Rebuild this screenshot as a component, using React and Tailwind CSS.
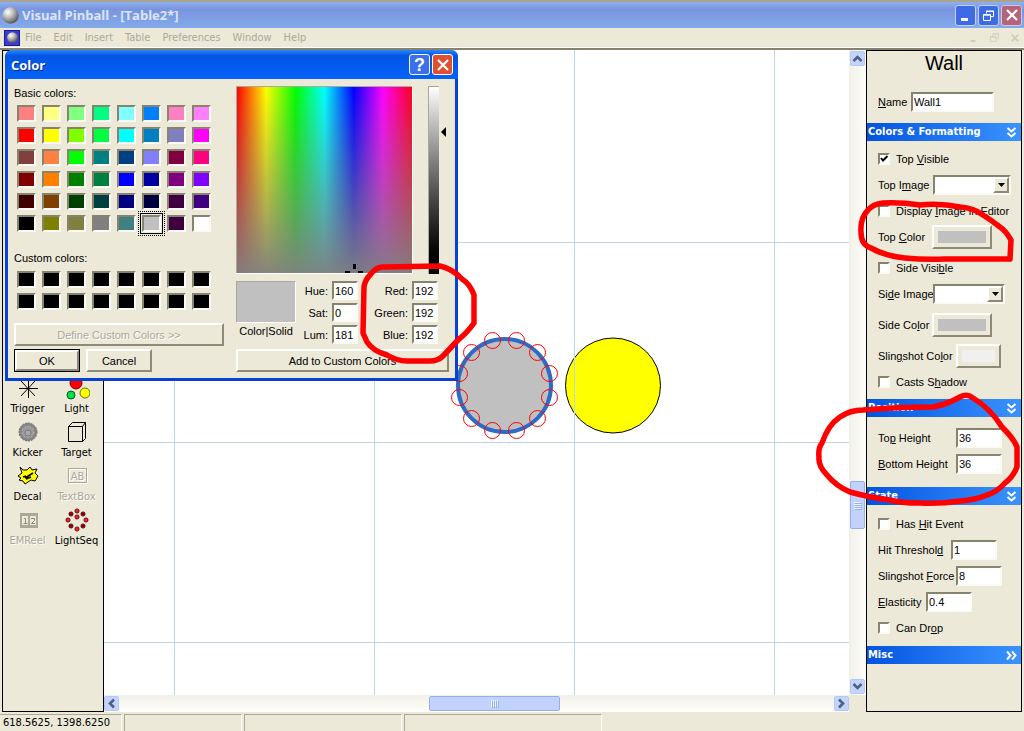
import { useState } from 'react';
import { clsx } from 'clsx';

const MENUS = ['File', 'Edit', 'Insert', 'Table', 'Preferences', 'Window', 'Help'];

const BASIC_COLORS = [
  '#ff8080', '#ffff80', '#80ff80', '#00ff80', '#80ffff', '#0080ff', '#ff80c0', '#ff80ff',
  '#ff0000', '#ffff00', '#80ff00', '#00ff40', '#00ffff', '#0080c0', '#8080c0', '#ff00ff',
  '#804040', '#ff8040', '#00ff00', '#008080', '#004080', '#8080ff', '#800040', '#ff0080',
  '#800000', '#ff8000', '#008000', '#008040', '#0000ff', '#0000a0', '#800080', '#8000ff',
  '#400000', '#804000', '#004000', '#004040', '#000080', '#000040', '#400040', '#400080',
  '#000000', '#808000', '#808040', '#808080', '#408080', '#c0c0c0', '#400040', '#ffffff',
];

const NODES = [
  [492, 340], [516, 340], [537, 352], [549, 373], [549, 397], [537, 418],
  [516, 430], [492, 430], [471, 418], [459, 397], [459, 373], [471, 352],
];

const SUNKEN = 'border-2 border-t-[#86836f] border-l-[#86836f] border-r-[#fbfaf4] border-b-[#fbfaf4]';
const RAISED = 'border-2 border-t-white border-l-white border-r-[#8d8a78] border-b-[#8d8a78]';

export default function App() {
  const [dialogOpen, setDialogOpen] = useState(true);

  return (
    <div className="relative flex h-screen flex-col overflow-hidden bg-[#ece9d8] font-['Liberation_Sans',sans-serif] text-[11px] leading-[14px] text-black">
      <TitleBar />
      <MenuBar />
      <div className="flex min-h-0 flex-1 border-t-2 border-[#85826f] pl-[2px] pr-[2px]">
        <Palette />
        <Workspace />
        <Properties />
      </div>
      <StatusBar />
      {dialogOpen && <ColorDialog onClose={() => setDialogOpen(false)} />}
      <Markup />
    </div>
  );
}

function Ball({ size, id }) {
  return (
    <svg width={size} height={size} viewBox="0 0 16 16" aria-hidden="true">
      <defs>
        <radialGradient id={id} cx="0.35" cy="0.3" r="0.7">
          <stop offset="0" stopColor="#ffffff" />
          <stop offset="0.45" stopColor="#bdbdbd" />
          <stop offset="1" stopColor="#5c5c5c" />
        </radialGradient>
      </defs>
      <circle cx="8" cy="8" r="7.8" fill={`url(#${id})`} />
    </svg>
  );
}

function RestoreIcon({ size = 11 }) {
  return (
    <svg width={size} height={size} viewBox="0 0 11 11" fill="none" stroke="currentColor" aria-hidden="true">
      <path d="M3.5 3.5V1.5H10.5V6.5H8M3 1H11" />
      <path d="M.5 4.5H7.5V10.5H.5ZM0 5.2H8" />
    </svg>
  );
}

function CrossIcon({ size = 12, width = 2.2 }) {
  return (
    <svg width={size} height={size} viewBox="0 0 12 12" stroke="currentColor" strokeWidth={width} aria-hidden="true">
      <path d="M1 1L11 11M11 1L1 11" />
    </svg>
  );
}

function MinIcon({ size = 12 }) {
  return (
    <svg width={size} height={size} viewBox="0 0 12 12" fill="currentColor" aria-hidden="true">
      <path d="M1 9h7v3H1z" />
    </svg>
  );
}

function CaptionButton({ label, className, children }) {
  return (
    <button aria-label={label} className={clsx('flex size-[21px] items-center justify-center rounded-[3px] border text-white', className)}>
      {children}
    </button>
  );
}

function TitleBar() {
  return (
    <header className="flex h-7 shrink-0 items-center border-t-2 border-[#a9a48f] bg-linear-to-b from-[#8fb0ee] via-[#7994de] via-30% to-[#84abea] pl-[2px] pr-[2px]">
      <Ball size={17} id="ball-title" />
      <h1 className="ml-[3px] flex-1 font-['Open_Sans',sans-serif] text-[13px] leading-4 font-bold text-[#dbe5fa]">Visual Pinball - [Table2*]</h1>
      <div className="flex gap-[2px]">
        <CaptionButton label="Minimize" className="border-[#c3d3f6] bg-[#3f6ae6]"><MinIcon /></CaptionButton>
        <CaptionButton label="Restore" className="border-[#c3d3f6] bg-[#3f6ae6]"><RestoreIcon /></CaptionButton>
        <CaptionButton label="Close" className="border-[#d5c5dc] bg-[#b3647a]"><CrossIcon /></CaptionButton>
      </div>
    </header>
  );
}

function MenuBar() {
  return (
    <nav className="flex h-5 shrink-0 items-center border-b border-white pl-1 text-[#aca899]">
      <span className="flex size-4 items-center justify-center border border-[#1a1a90] bg-[#3b3bd8]"><Ball size={11} id="ball-menu" /></span>
      <div className="ml-[5px] flex flex-1 gap-3 font-['DejaVu_Sans_Condensed','DejaVu_Sans',sans-serif]">
        {MENUS.map((m) => <button key={m}>{m}</button>)}
      </div>
      <div className="flex gap-3 pr-[5px] text-[#cfccbc]">
        <button aria-label="Minimize table"><MinIcon size={8} /></button>
        <button aria-label="Restore table"><RestoreIcon size={9} /></button>
        <button aria-label="Close table"><CrossIcon size={8} width={2.5} /></button>
      </div>
    </nav>
  );
}

const TOOLS = [
  { name: 'Trigger', icon: TriggerIcon },
  { name: 'Light', icon: LightIcon },
  { name: 'Kicker', icon: KickerIcon },
  { name: 'Target', icon: TargetIcon },
  { name: 'Decal', icon: DecalIcon },
  { name: 'TextBox', icon: TextBoxIcon, disabled: true },
  { name: 'EMReel', icon: ReelIcon, disabled: true },
  { name: 'LightSeq', icon: LightSeqIcon },
];

function Palette() {
  return (
    <aside className="w-[102px] shrink-0 border border-black">
      <div className="mt-[325px] grid w-[98px] grid-cols-2 font-['DejaVu_Sans_Condensed','DejaVu_Sans',sans-serif]">
        {TOOLS.map(({ name, icon: Icon, disabled }) => (
          <button
            key={name}
            disabled={disabled}
            className={clsx('flex h-11 flex-col items-center', disabled && 'text-[#aca899] [text-shadow:1px_1px_0_white]')}
          >
            <Icon />
            <span>{name}</span>
          </button>
        ))}
      </div>
    </aside>
  );
}

function ToolIcon({ children }) {
  return <svg width="26" height="26" viewBox="0 0 26 26" fill="none" className="shrink-0" aria-hidden="true">{children}</svg>;
}

function TriggerIcon() {
  return (
    <ToolIcon>
      <path d="M13.5 2V22M4 12.5H23M6 5L20 20M20 5L6 20" stroke="#000" />
    </ToolIcon>
  );
}

function LightIcon() {
  return (
    <ToolIcon>
      <circle cx="12" cy="7" r="6" fill="#f00" stroke="#800000" />
      <circle cx="7" cy="19" r="4" fill="#00e040" stroke="#006020" />
      <circle cx="21" cy="17" r="5" fill="#ff0" stroke="#707000" />
    </ToolIcon>
  );
}

function KickerIcon() {
  return (
    <ToolIcon>
      <circle cx="13" cy="12" r="9" fill="#858585" stroke="#6a6a6a" strokeDasharray="2 1" />
      <circle cx="13" cy="12" r="6" fill="#9b9b9b" stroke="#b5b5b5" strokeDasharray="2 2" />
      <circle cx="13" cy="13" r="3" fill="#a9a9a9" stroke="#7b7b7b" />
    </ToolIcon>
  );
}

function TargetIcon() {
  return (
    <ToolIcon>
      <path d="M4.5 6.5H18.5V21.5H4.5ZM4.5 6.5L8.5 2.5H21.500L18.5 6.5M21.500 2.500V18.500L18.5 21.5" stroke="#000" />
    </ToolIcon>
  );
}

function DecalIcon() {
  return (
    <ToolIcon>
      <path d="M5 3L8 6H12L15 3L17 6L22 5L20 9L23 12L20 17L16 16L10 20L8 17L4 16L6 14L3 12L7 9Z" fill="#ff0" stroke="#000" />
      <path d="M8 13L11 12M10 14L18 9M11 15L16 13" stroke="#000" strokeWidth="1.5" />
    </ToolIcon>
  );
}

function TextBoxIcon() {
  return (
    <ToolIcon>
      <rect x="5.5" y="5.5" width="18" height="14" stroke="#fff" />
      <rect x="4.5" y="4.5" width="18" height="14" stroke="#aca899" />
      <text x="13.5" y="16" textAnchor="middle" fontSize="11" fill="#aca899">AB</text>
    </ToolIcon>
  );
}

function ReelIcon() {
  return (
    <ToolIcon>
      <rect x="5.5" y="5.5" width="17" height="14" fill="#aca899" stroke="#aca899" />
      <rect x="7" y="8" width="6" height="9" fill="#ece9d8" />
      <rect x="15" y="8" width="6" height="9" fill="#ece9d8" />
      <path d="M9 10.5h1.5V15M8.5 15.5h4M16 10.5h3.500v2L16.500 15.500H20" stroke="#8f8b7a" />
    </ToolIcon>
  );
}

function LightSeqIcon() {
  const dots = [[13, 3], [7, 6], [19, 6], [4, 12], [22, 12], [7, 18], [19, 18], [13, 21], [13, 9]];
  return (
    <ToolIcon>
      {dots.map(([x, y], i) => (
        <circle key={i} cx={x} cy={y} r="2.1" fill={x === 13 || y === 12 ? '#f02020' : '#900010'} stroke="#500000" strokeWidth="0.8" />
      ))}
    </ToolIcon>
  );
}

function Chevron({ rotate }) {
  return (
    <svg width="11" height="11" viewBox="0 0 11 11" fill="none" stroke="#4d6185" strokeWidth="2.6" className={rotate} aria-hidden="true">
      <path d="M1.5 8L5.5 4L9.5 8" />
    </svg>
  );
}

const SCROLL_BTN = 'flex size-[15px] shrink-0 items-center justify-center rounded-[2px] border border-[#b4c8f6] bg-[#c4d4fc]';

function Workspace() {
  return (
    <main className="grid min-w-0 flex-1 grid-cols-[1fr_17px] grid-rows-[1fr_17px]">
      <div className="overflow-hidden bg-white"><TableCanvas /></div>
      <div className="flex flex-col items-center bg-linear-to-r from-[#f1f0e8] to-[#fefefb] py-px">
        <button aria-label="Scroll up" className={SCROLL_BTN}><Chevron /></button>
        <div className="mt-[415px] flex h-12 w-[15px] flex-col items-center justify-center gap-px rounded-[2px] border border-[#98b0e8] bg-[#c2d2fc]">
          <Grip className="h-px w-[7px]" />
        </div>
        <button aria-label="Scroll down" className={clsx(SCROLL_BTN, 'mt-auto')}><Chevron rotate="rotate-180" /></button>
      </div>
      <div className="flex items-center bg-linear-to-b from-[#f1f0e8] to-[#fefefb]">
        <button aria-label="Scroll left" className={SCROLL_BTN}><Chevron rotate="-rotate-90" /></button>
        <div className="ml-[310px] flex h-[15px] w-[131px] items-center justify-center gap-px rounded-[2px] border border-[#98b0e8] bg-[#c2d2fc]">
          <Grip className="h-[7px] w-px" />
        </div>
        <button aria-label="Scroll right" className={clsx(SCROLL_BTN, 'ml-auto')}><Chevron rotate="rotate-90" /></button>
      </div>
      <div />
    </main>
  );
}

function Grip({ className }) {
  return [0, 1, 2, 3].map((i) => <i key={i} className={clsx('bg-[#eef4fe] shadow-[1px_1px_0_#8cb0f8]', className)} />);
}

function TableCanvas() {
  return (
    <svg width="100%" height="100%" fill="none" className="block" role="img" aria-label="Table layout">
      <g transform="translate(-104 -50)">
        <circle cx="504.5" cy="385.5" r="46.5" fill="#c0c0c0" stroke="#316ac5" strokeWidth="4" />
        <circle cx="613" cy="385.5" r="47.5" fill="#ff0" stroke="#000" />
        <g stroke="#bcd6e6">
          {[174.5, 374.5, 574.5, 774.5].map((x) => <path key={x} d={`M${x} 50V3000`} />)}
          {[242.5, 442.5, 642.5].map((y) => <path key={y} d={`M104 ${y}H3000`} />)}
        </g>
        {NODES.map(([x, y]) => <circle key={`${x}-${y}`} cx={x + 0.5} cy={y + 0.5} r="8" stroke="#f00" />)}
      </g>
    </svg>
  );
}

function Section({ title, closed, children }) {
  return (
    <section>
      <h3>
        <button className="flex h-[18px] w-full items-center justify-between bg-linear-to-r from-[#0453e0] to-[#3a93ff] pl-px pr-1 font-['DejaVu_Sans_Condensed','DejaVu_Sans',sans-serif] font-bold text-white">
          {title}
          <svg width="11" height="11" viewBox="0 0 11 11" fill="none" stroke="#fff" strokeWidth="2" className={closed ? '-rotate-90' : ''} aria-hidden="true">
            <path d="M1.5 1L5.5 4.5L9.5 1M1.5 6L5.5 9.5L9.5 6" />
          </svg>
        </button>
      </h3>
      {children}
    </section>
  );
}

// "Top _Visible" underlines the letter that follows the underscore
function Mnemonic({ text }) {
  const [head, ...rest] = text.split('_');
  return <>{head}{rest.map((part, i) => <span key={i}><u>{part[0]}</u>{part.slice(1)}</span>)}</>;
}

function Check({ label, defaultChecked, className }) {
  return (
    <label className={clsx('flex h-[26px] items-center gap-[6px]', className)}>
      <span className="grid">
        <input type="checkbox" defaultChecked={defaultChecked} className={clsx('peer col-start-1 row-start-1 size-3 appearance-none bg-white', SUNKEN)} />
        <svg width="12" height="12" viewBox="0 0 12 12" fill="none" stroke="#000" strokeWidth="2" className="pointer-events-none col-start-1 row-start-1 hidden peer-checked:block" aria-hidden="true">
          <path d="M3 5L5 7.5L9.5 3" />
        </svg>
      </span>
      <span><Mnemonic text={label} /></span>
    </label>
  );
}

function Row({ id, label, labelWidth, className, children }) {
  return (
    <div className={clsx('flex h-[26px] items-center', className)}>
      <label htmlFor={id} className={clsx('shrink-0 whitespace-nowrap', labelWidth)}><Mnemonic text={label} /></label>
      {children}
    </div>
  );
}

function TextInput({ id, value, width = 'w-[46px]' }) {
  return <input id={id} type="text" defaultValue={value} className={clsx('h-5 bg-white px-px outline-none', SUNKEN, width)} />;
}

function ImageSelect({ id, width }) {
  return (
    <span className={clsx('relative block h-5 bg-white', SUNKEN, width)}>
      <select id={id} className="size-full appearance-none outline-none"><option value="" aria-label="None" /></select>
      <span className={clsx('pointer-events-none absolute inset-y-0 right-0 flex w-4 items-center justify-center bg-[#ece9d8]', RAISED)}>
        <svg width="7" height="4" viewBox="0 0 7 4" className="shrink-0" aria-hidden="true"><path d="M0 0H7L3.5 4Z" /></svg>
      </span>
    </span>
  );
}

function ColorButton({ id, size, color }) {
  return (
    <button id={id} className={clsx('flex h-6 items-center justify-center px-1', RAISED, size)}>
      <span className={clsx('block h-3 w-full', color)} />
    </button>
  );
}

function Properties() {
  return (
    <aside className="w-[156px] shrink-0 border border-black">
      <h2 className="h-[26px] text-center text-[20px] leading-6">Wall</h2>
      <div className="pt-3 pb-2 pl-[11px]">
        <Row id="name" label="_Name" labelWidth="w-[33px]"><TextInput id="name" value="Wall1" width="w-[83px]" /></Row>
      </div>
      <Section title="Colors & Formatting">
        <div className="pt-[5px] pb-1 pl-[11px]">
          <Check label="Top _Visible" defaultChecked />
          <Row id="top-image" label="Top I_mage" labelWidth="w-[55px]"><ImageSelect id="top-image" width="w-[78px]" /></Row>
          <Check label="Display _Image in Editor" />
          <Row id="top-color" label="Top _Color" labelWidth="w-[54px]"><ColorButton id="top-color" size="w-[60px]" color="bg-[#c0c0c0]" /></Row>
          <Check label="Side Visi_ble" className="mt-[5px]" />
          <Row id="side-image" label="Si_de Image" labelWidth="w-[55px]"><ImageSelect id="side-image" width="w-[72px]" /></Row>
          <Row id="side-color" label="Side Co_lor" labelWidth="w-[54px]" className="mt-[5px]"><ColorButton id="side-color" size="w-[60px]" color="bg-[#c0c0c0]" /></Row>
          <Row id="sling-color" label="Slin_gshot Co_lor" labelWidth="w-[78px]" className="mt-[5px]"><ColorButton id="sling-color" size="w-[45px]" color="bg-[#f0f0f0]" /></Row>
          <Check label="Casts S_hadow" />
        </div>
      </Section>
      <Section title="Position">
        <div className="pt-2 pb-[10px] pl-[11px]">
          <Row id="top-height" label="To_p Height" labelWidth="w-[78px]"><TextInput id="top-height" value="36" /></Row>
          <Row id="bottom-height" label="_Bottom Height" labelWidth="w-[78px]"><TextInput id="bottom-height" value="36" /></Row>
        </div>
      </Section>
      <Section title="State">
        <div className="pt-[6px] pb-[5px] pl-[11px]">
          <Check label="Has _Hit Event" />
          <Row id="hit" label="Hit Threshol_d" labelWidth="w-[73px]"><TextInput id="hit" value="1" /></Row>
          <Row id="force" label="Slingshot _Force" labelWidth="w-[78px]"><TextInput id="force" value="8" /></Row>
          <Row id="elasticity" label="_Elasticity" labelWidth="w-[48px]"><TextInput id="elasticity" value="0.4" /></Row>
          <Check label="Can Dr_op" />
        </div>
      </Section>
      <Section title="Misc" closed />
    </aside>
  );
}

function StatusBar() {
  const pane = 'border-t border-r border-t-[#aca899] border-r-white';
  return (
    <footer className="flex h-[19px] shrink-0 gap-[2px] pt-[2px] font-['DejaVu_Sans_Condensed','DejaVu_Sans',sans-serif]">
      <div className={clsx('w-[122px] pl-[3px] leading-[16px]', pane)}>618.5625, 1398.6250</div>
      <div className={clsx('w-[118px] border-l border-l-[#aca899]', pane)} />
      <div className={clsx('w-[158px] border-l border-l-[#aca899]', pane)} />
      <div className={clsx('w-[198px] border-l border-l-[#aca899]', pane)} />
    </footer>
  );
}

function Swatch({ color, selected }) {
  return (
    <button
      aria-label={color}
      className={clsx('h-[17px] w-[19px]', SUNKEN, selected && 'shadow-[0_0_0_1px_#ece9d8,0_0_0_2px_#000] outline-1 outline-offset-3 outline-dotted outline-black')}
      style={{ backgroundColor: color }}
    />
  );
}

function NumberField({ id, label, value }) {
  return (
    <div className="flex items-center justify-end gap-1">
      <label htmlFor={id}>{label}:</label>
      <input id={id} type="text" defaultValue={value} className={clsx('h-[19px] w-[26px] bg-white px-px outline-none', SUNKEN)} />
    </div>
  );
}

function ColorDialog({ onClose }) {
  return (
    <div role="dialog" aria-label="Color" className="absolute top-[50px] left-[5px] w-[453px] rounded-t-[7px] border-x-[3px] border-b-[3px] border-[#0842d4] bg-[#ece9d8]">
      <div className="-mx-[3px] flex h-[29px] items-center gap-[2px] rounded-t-[7px] bg-linear-to-b from-[#2a86f8] via-[#0354e4] via-20% to-[#0463fb] px-[5px]">
        <h2 className="flex-1 pl-px font-['Open_Sans',sans-serif] text-[13px] leading-4 font-bold text-white [text-shadow:1px_1px_0_#0a2a80]">Color</h2>
        <button aria-label="Help" className="flex size-[21px] items-center justify-center rounded-[3px] border border-white bg-[#3c70ea] text-[18px] leading-5 font-bold text-white">?</button>
        <button aria-label="Close" onClick={onClose} className="flex size-[21px] items-center justify-center rounded-[3px] border border-white bg-[#df5030] text-white"><CrossIcon /></button>
      </div>
      <div className="flex justify-between px-[6px] pt-[7px] pb-[6px]">
        <div className="flex w-[210px] flex-col">
          <p>Basic colors:</p>
          <div className="mt-[5px] grid grid-cols-[repeat(8,19px)] gap-x-[6px] gap-y-[5px] pl-[3px]">
            {BASIC_COLORS.map((c, i) => <Swatch key={i} color={c} selected={i === 45} />)}
          </div>
          <p className="mt-[19px]">Custom colors:</p>
          <div className="mt-[6px] grid grid-cols-[repeat(8,19px)] gap-x-[6px] gap-y-[5px] pl-[3px]">
            {Array.from({ length: 16 }, (_, i) => <Swatch key={i} color="#000000" />)}
          </div>
          <button disabled className={clsx('mt-auto h-[23px] text-[#aca899] [text-shadow:1px_1px_0_white]', RAISED)}>Define Custom Colors &gt;&gt;</button>
          <div className="mt-[3px] flex gap-[6px]">
            <button onClick={onClose} className="h-[23px] w-[66px] border border-black"><span className={clsx('flex size-full items-center justify-center', RAISED)}>OK</span></button>
            <button onClick={onClose} className={clsx('h-[23px] w-[66px]', RAISED)}>Cancel</button>
          </div>
        </div>
        <div className="flex w-[213px] flex-col">
          <div className="flex">
            <Spectrum />
            <div className="ml-[15px] h-[188px] w-[11px] border-t border-l border-[#aca899] bg-linear-to-b from-white to-black" />
            <svg width="5" height="10" viewBox="0 0 5 10" className="mt-[41px] ml-[2px]" aria-hidden="true"><path d="M5 0V10L0 5Z" /></svg>
          </div>
          <div className="mt-[7px] flex">
            <div className="flex w-[60px] flex-col items-center">
              <div className="h-[42px] w-full border border-t-[#aca899] border-l-[#aca899] border-r-white border-b-white bg-[#c0c0c0]" />
              <span className="mt-px whitespace-nowrap">Color|Solid</span>
            </div>
            <div className="flex w-[62px] flex-col gap-[3px]">
              <NumberField id="hue" label="Hue" value="160" />
              <NumberField id="sat" label="Sat" value="0" />
              <NumberField id="lum" label="Lum" value="181" />
            </div>
            <div className="flex w-[80px] flex-col gap-[3px]">
              <NumberField id="red" label="Red" value="192" />
              <NumberField id="green" label="Green" value="192" />
              <NumberField id="blue" label="Blue" value="192" />
            </div>
          </div>
          <button className={clsx('mt-[5px] h-[23px]', RAISED)}>Add to Custom Colors</button>
        </div>
      </div>
    </div>
  );
}

function Spectrum() {
  const hues = ['#f00', '#ff0', '#0f0', '#0ff', '#00f', '#f0f', '#ff0020'];
  return (
    <svg width="177" height="188" viewBox="0 0 177 188" role="img" aria-label="Hue and saturation">
      <defs>
        <linearGradient id="hue-ramp">
          {hues.map((c, i) => <stop key={c} offset={i / 6} stopColor={c} />)}
        </linearGradient>
        <linearGradient id="sat-ramp" x2="0" y2="1">
          <stop offset="0" stopColor="#808080" stopOpacity="0" />
          <stop offset="1" stopColor="#808080" stopOpacity="0.96" />
        </linearGradient>
      </defs>
      <rect width="177" height="188" fill="#fff" />
      <rect width="176" height="187" fill="#aca899" />
      <rect x="1" y="1" width="175" height="186" fill="url(#hue-ramp)" />
      <rect x="1" y="1" width="175" height="186" fill="url(#sat-ramp)" />
      <path d="M117 178h3v5h-3zM109 185h5v2h-5zM122 185h5v2h-5z" fill="#000" />
    </svg>
  );
}

// Hand-drawn red rings around the values that matter
function Markup() {
  return (
    <svg className="pointer-events-none absolute inset-0 size-full" fill="none" stroke="#f00" strokeWidth="5.5" strokeLinejoin="round" aria-hidden="true">
      <path d="M383 267L440 266Q453 269 462 279Q470 284 474 295V323Q467 333 458 340L443 356Q438 361 430 361H407Q397 361 387 355Q373 351 367 342L363 333L364 287Q365 280 370 275Q376 267 383 267Z" />
      <path d="M883 203Q873 204 868 210Q860 218 861 232Q861 245 871 248Q885 256 905 258Q925 260 945 259H1010L1011 240Q1006 231 1000 227Q991 220 983 215Q974 208 960 207Q940 203 920 205Q900 202 883 203Z" />
      <path d="M933 407Q948 404 960 397Q967 393 973 398Q990 408 1002 427Q1014 439 1017 447V467Q1013 477 1005 483Q997 492 987 495Q975 500 960 501Q940 504 920 503Q900 503 890 500Q868 497 850 492Q836 486 827 475Q818 466 819 457Q818 448 822 443Q828 425 840 417Q850 410 863 410Q895 407 933 407Z" />
    </svg>
  );
}
